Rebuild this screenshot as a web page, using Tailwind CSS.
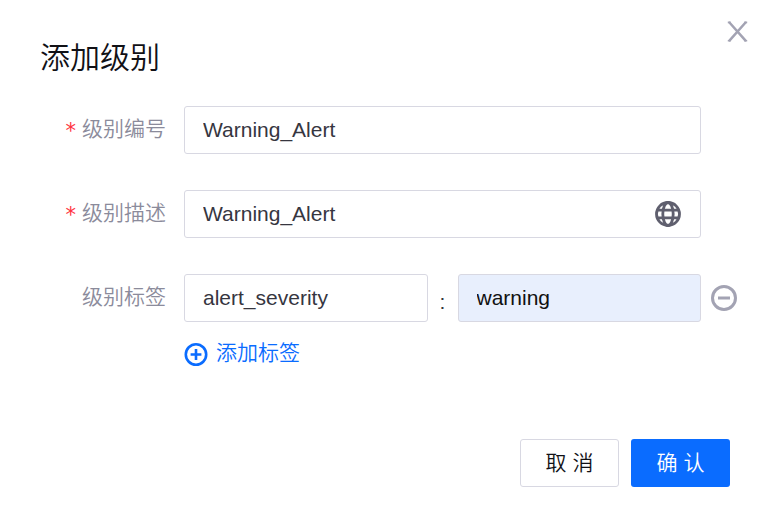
<!DOCTYPE html>
<html lang="zh-CN">
<head>
<meta charset="utf-8">
<meta name="viewport" content="width=device-width, initial-scale=1">
<title>添加级别</title>
<script src="https://cdn.jsdelivr.net/npm/@tailwindcss/browser@4"></script>
</head>
<body class="bg-white font-['Liberation_Sans','Noto_Sans_CJK_SC',sans-serif] text-[21px] leading-8 text-[#36363f]">
<section role="dialog" aria-labelledby="title" class="w-full">
  <header class="flex items-start justify-between pl-10 pr-4 pt-5">
    <h1 id="title" class="pt-4 text-[30px] leading-11 font-[350] text-[#111116]">添加级别</h1>
    <button type="button" aria-label="关闭" class="pr-0.5 text-[#a3a3b3]">
      <svg class="size-6" viewBox="0 0 24 24" fill="none" stroke="currentColor" stroke-width="2.5"><path d="M4 2 21 21.2M21 2 4 21.2"/><path d="M2.8 2.4h2.8M19.4 2.4h2.8M2.8 20.8h2.8M19.4 20.8h2.8" stroke-width="1.6"/></svg>
    </button>
  </header>
  <form>
    <div class="flex flex-col gap-9 pt-[26px]">
      <div class="flex items-center pr-[66px]">
        <label for="code" class="flex w-[184px] shrink-0 justify-end gap-1.5 pr-[18px] pb-0.5 font-[350] text-[#8b8b9b]"><span class="pt-0.5 -mb-0.5 font-['DejaVu_Sans',sans-serif] font-normal text-[#ff3340]">*</span>级别编号</label>
        <input id="code" value="Warning_Alert" required class="h-12 min-w-0 flex-1 rounded-[3px] border border-[#d8d8e2] px-[18px]">
      </div>
      <div class="flex items-center pr-[66px]">
        <label for="desc" class="flex w-[184px] shrink-0 justify-end gap-1.5 pr-[18px] pb-0.5 font-[350] text-[#8b8b9b]"><span class="pt-0.5 -mb-0.5 font-['DejaVu_Sans',sans-serif] font-normal text-[#ff3340]">*</span>级别描述</label>
        <div class="flex h-12 min-w-0 flex-1 items-center rounded-[3px] border border-[#d8d8e2] px-[18px]">
          <input id="desc" value="Warning_Alert" required class="min-w-0 flex-1 outline-none">
          <button type="button" aria-label="多语言" class="text-[#5f5f6e]">
            <svg class="size-7" viewBox="0 0 28 28" fill="none" stroke="currentColor" stroke-width="2.8"><circle cx="14" cy="14" r="11.5"/><ellipse cx="14" cy="14" rx="5.2" ry="11.5"/><path d="M3.2 10.2h21.6M3.2 17.8h21.6"/></svg>
          </button>
        </div>
      </div>
      <div class="flex items-center pr-7">
        <label for="key" class="w-[184px] shrink-0 pr-[18px] pb-0.5 text-right font-[350] text-[#8b8b9b]">级别标签</label>
        <input id="key" value="alert_severity" class="h-12 min-w-0 flex-1 rounded-[3px] border border-[#d8d8e2] px-[18px]">
        <span class="w-[30px] shrink-0 pt-2 text-center">:</span>
        <input aria-label="标签值" value="warning" class="h-12 min-w-0 flex-1 rounded-[3px] border border-[#d8d8e2] bg-[#e8effd] px-[18px] text-[#111]">
        <button type="button" aria-label="删除标签" class="ml-[9px] text-[#a3a3b3]">
          <svg class="size-[29px]" viewBox="0 0 29 29" fill="none" stroke="currentColor" stroke-width="3"><circle cx="14" cy="14" r="11.5"/><path d="M8 14h12"/></svg>
        </button>
      </div>
    </div>
    <button type="button" class="ml-[184px] mt-[17px] flex items-center gap-2 font-[350] text-[#0a6cff]">
      <svg class="size-6" viewBox="0 0 24 24" fill="none" stroke="currentColor" stroke-width="2.6"><circle cx="12" cy="12.5" r="10.2"/><path d="M6.6 12.5h10.8M12 7.1v10.8"/></svg>
      <span class="-mt-0.5">添加标签</span>
    </button>
    <footer class="mt-[70px] flex justify-end gap-3 pr-[37px] pb-6">
      <button type="button" class="h-12 w-[99px] rounded-[3px] border border-[#d8d8e2] font-[350] text-[#111116]">取 消</button>
      <button type="submit" class="h-12 w-[99px] rounded-[3px] bg-[#0a6cff] font-[350] text-white">确 认</button>
    </footer>
  </form>
</section>
</body>
</html>
